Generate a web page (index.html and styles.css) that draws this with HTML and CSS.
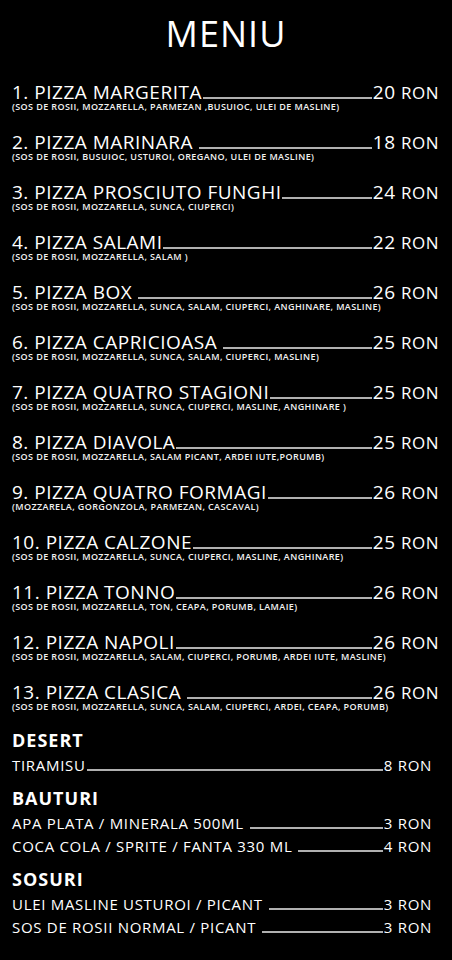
FILE: index.html
```html
<!DOCTYPE html>
<html lang="ro">
<head>
    <meta charset="UTF-8">
    <meta name="viewport" content="width=device-width, initial-scale=1.0">
    <title>Meniu</title>
    <link rel="stylesheet" href="styles.css">
</head>
<body>
    <div class="menu">
        <h1 class="title">MENIU</h1>

        <div class="pizzas">
            <div class="item">
                <div class="row"><span class="name">1. PIZZA MARGERITA</span><span class="fill"></span><span class="price">20 <small>RON</small></span></div>
                <p class="desc">(SOS DE ROSII, MOZZARELLA, PARMEZAN ,BUSUIOC, ULEI DE MASLINE)</p>
            </div>
            <div class="item">
                <div class="row"><span class="name">2. PIZZA MARINARA</span><span class="fill spaced"></span><span class="price">18 <small>RON</small></span></div>
                <p class="desc">(SOS DE ROSII, BUSUIOC, USTUROI, OREGANO, ULEI DE MASLINE)</p>
            </div>
            <div class="item">
                <div class="row"><span class="name">3. PIZZA PROSCIUTO FUNGHI</span><span class="fill"></span><span class="price">24 <small>RON</small></span></div>
                <p class="desc">(SOS DE ROSII, MOZZARELLA, SUNCA, CIUPERCI)</p>
            </div>
            <div class="item">
                <div class="row"><span class="name">4. PIZZA SALAMI</span><span class="fill"></span><span class="price">22 <small>RON</small></span></div>
                <p class="desc">(SOS DE ROSII, MOZZARELLA, SALAM )</p>
            </div>
            <div class="item">
                <div class="row"><span class="name">5. PIZZA BOX</span><span class="fill spaced"></span><span class="price">26 <small>RON</small></span></div>
                <p class="desc">(SOS DE ROSII, MOZZARELLA, SUNCA, SALAM, CIUPERCI, ANGHINARE, MASLINE)</p>
            </div>
            <div class="item">
                <div class="row"><span class="name">6. PIZZA CAPRICIOASA</span><span class="fill spaced"></span><span class="price">25 <small>RON</small></span></div>
                <p class="desc">(SOS DE ROSII, MOZZARELLA, SUNCA, SALAM, CIUPERCI, MASLINE)</p>
            </div>
            <div class="item">
                <div class="row"><span class="name">7. PIZZA QUATRO STAGIONI</span><span class="fill"></span><span class="price">25 <small>RON</small></span></div>
                <p class="desc">(SOS DE ROSII, MOZZARELLA, SUNCA, CIUPERCI, MASLINE, ANGHINARE )</p>
            </div>
            <div class="item">
                <div class="row"><span class="name">8. PIZZA DIAVOLA</span><span class="fill"></span><span class="price">25 <small>RON</small></span></div>
                <p class="desc">(SOS DE ROSII, MOZZARELLA, SALAM PICANT, ARDEI IUTE,PORUMB)</p>
            </div>
            <div class="item">
                <div class="row"><span class="name">9. PIZZA QUATRO FORMAGI</span><span class="fill"></span><span class="price">26 <small>RON</small></span></div>
                <p class="desc">(MOZZARELA, GORGONZOLA, PARMEZAN, CASCAVAL)</p>
            </div>
            <div class="item">
                <div class="row"><span class="name">10. PIZZA CALZONE</span><span class="fill"></span><span class="price">25 <small>RON</small></span></div>
                <p class="desc">(SOS DE ROSII, MOZZARELLA, SUNCA, CIUPERCI, MASLINE, ANGHINARE)</p>
            </div>
            <div class="item">
                <div class="row"><span class="name">11. PIZZA TONNO</span><span class="fill"></span><span class="price">26 <small>RON</small></span></div>
                <p class="desc">(SOS DE ROSII, MOZZARELLA, TON, CEAPA, PORUMB, LAMAIE)</p>
            </div>
            <div class="item">
                <div class="row"><span class="name">12. PIZZA NAPOLI</span><span class="fill"></span><span class="price">26 <small>RON</small></span></div>
                <p class="desc">(SOS DE ROSII, MOZZARELLA, SALAM, CIUPERCI, PORUMB, ARDEI IUTE, MASLINE)</p>
            </div>
            <div class="item">
                <div class="row"><span class="name">13. PIZZA CLASICA</span><span class="fill spaced"></span><span class="price">26 <small>RON</small></span></div>
                <p class="desc">(SOS DE ROSII, MOZZARELLA, SUNCA, SALAM, CIUPERCI, ARDEI, CEAPA, PORUMB)</p>
            </div>
        </div>

        <div class="section first">
            <h2>DESERT</h2>
            <div class="row small"><span class="name">TIRAMISU</span><span class="fill"></span><span class="price">8 RON</span></div>
        </div>

        <div class="section">
            <h2>BAUTURI</h2>
            <div class="row small"><span class="name">APA PLATA / MINERALA 500ML</span><span class="fill spaced"></span><span class="price">3 RON</span></div>
            <div class="row small"><span class="name">COCA COLA / SPRITE / FANTA 330 ML</span><span class="fill spaced"></span><span class="price">4 RON</span></div>
        </div>

        <div class="section">
            <h2>SOSURI</h2>
            <div class="row small"><span class="name">ULEI MASLINE USTUROI / PICANT</span><span class="fill spaced"></span><span class="price">3 RON</span></div>
            <div class="row small"><span class="name">SOS DE ROSII NORMAL / PICANT</span><span class="fill spaced"></span><span class="price">3 RON</span></div>
        </div>
    </div>
</body>
</html>
```

FILE: styles.css
```css
body {
    margin: 0;
    background-color: #000;
    color: #fff;
    font-family: "Open Sans", "Noto Sans", sans-serif;
}
.menu {
    width: 452px;
    height: 960px;
    box-sizing: border-box;
    padding: 16px 12px 0 12px;
}
.title {
    margin: 0;
    text-align: center;
    font-size: 36px;
    font-weight: 400;
    line-height: 36px;
    letter-spacing: 1px;
}
.pizzas {
    margin-top: 32px;
    display: flex;
    flex-direction: column;
    gap: 22px;
}
.row {
    display: flex;
    align-items: baseline;
    font-size: 19px;
    line-height: 17px;
    letter-spacing: 0.5px;
    white-space: nowrap;
}
.fill {
    flex: 1;
    height: 0;
    border-bottom: 2px solid #b0b0b0;
    margin: 0 1px;
}
.fill.spaced {
    margin-left: 6px;
}
.price {
    padding-right: 1px;
}
.price small {
    font-size: 17px;
}
.desc {
    margin: 1px 0 0 0;
    font-size: 9px;
    line-height: 10px;
    font-weight: 600;
    letter-spacing: 0.4px;
    white-space: nowrap;
    color: #f2f2f2;
}
.section {
    margin-top: 15px;
    display: flex;
    flex-direction: column;
    gap: 6px;
}
.section.first {
    margin-top: 19px;
}
.section h2 {
    margin: 0 0 2px 0;
    font-size: 18px;
    line-height: 18px;
    font-weight: 700;
    letter-spacing: 1px;
}
.row.small {
    font-size: 15px;
    line-height: 17px;
    letter-spacing: 0.7px;
    padding-right: 7px;
}
```
